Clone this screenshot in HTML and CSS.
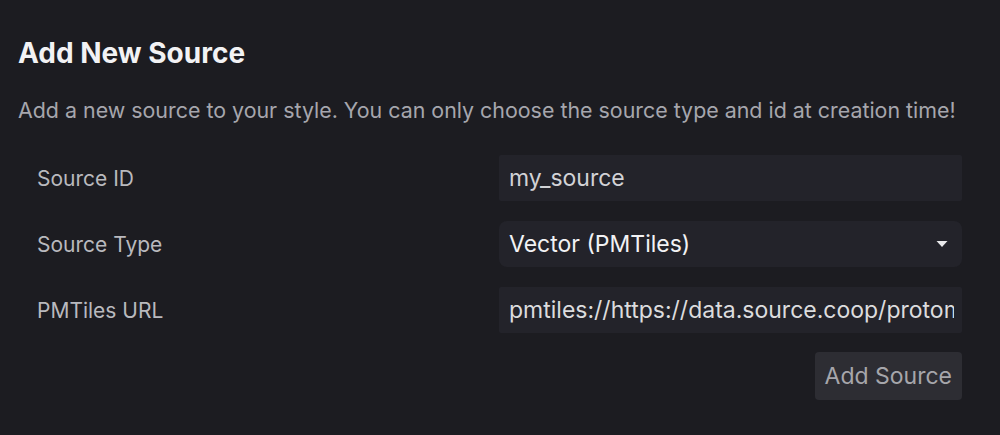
FILE: index.html
```html
<!DOCTYPE html>
<html>
<head>
<meta charset="utf-8">
<title>Add New Source</title>
<link rel="stylesheet" href="styles.css">
</head>
<body>
	<div class="modal">
		<h1 class="title">Add New Source</h1>
		<p class="desc">Add a new source to your style. You can only choose the source type and id at creation time!</p>
		<div class="form">
			<div class="row">
				<label class="label">Source ID</label>
				<div class="field input"><span class="text">my_source</span></div>
			</div>
			<div class="row">
				<label class="label">Source Type</label>
				<div class="field select">
					<span class="value">Vector (PMTiles)</span>
					<svg class="caret" width="12" height="8" viewBox="0 0 12 8"><path d="M0.5 1 L11.5 1 L6 7 Z" fill="#e8e8ea"/></svg>
				</div>
			</div>
			<div class="row">
				<label class="label">PMTiles URL</label>
				<div class="field input url"><span class="text">pmtiles://https://data.source.coop/protomaps/openstreetmap/v4.pmtiles</span></div>
			</div>
			<div class="actions">
				<button class="btn">Add Source</button>
			</div>
		</div>
	</div>
</body>
</html>
```
FILE: styles.css
```css
*{margin:0; padding:0; box-sizing:border-box;}
body{background:#1c1c21; font-family:Inter, "Noto Sans", sans-serif;}
.modal{padding:34px 38px 0 18px;}
.title{color:#f2f2f4; font-size:28px; font-weight:700; line-height:38px;}
.desc{color:#a6a6ad; font-size:21.4px; line-height:28px; margin-top:24px;}
.form{margin-top:31px;}
.row{display:grid; grid-template-columns:481px 1fr; align-items:center; height:46px; margin-bottom:20px;}
.label{color:#b9b9be; font-size:21px; padding-left:19px;}
.field{height:46px; background:#23232a; font-size:23px; padding:0 8px 0 10px; display:flex; align-items:center; overflow:hidden; white-space:nowrap;}
.field .text{overflow:hidden; white-space:nowrap; min-width:0;}
.input{border-radius:2px; color:#d2d2d6;}
.select{border-radius:8px; color:#f2f2f4; justify-content:space-between; padding-right:14px;}
.url{color:#dcdcde;}
.actions{display:flex; justify-content:flex-end; margin-top:-1px;}
.btn{background:#2d2d33; color:#a6a6ab; border:none; border-radius:4px; font-family:Inter, "Noto Sans", sans-serif; font-size:23px; height:48px; padding:0 10px;}
```
